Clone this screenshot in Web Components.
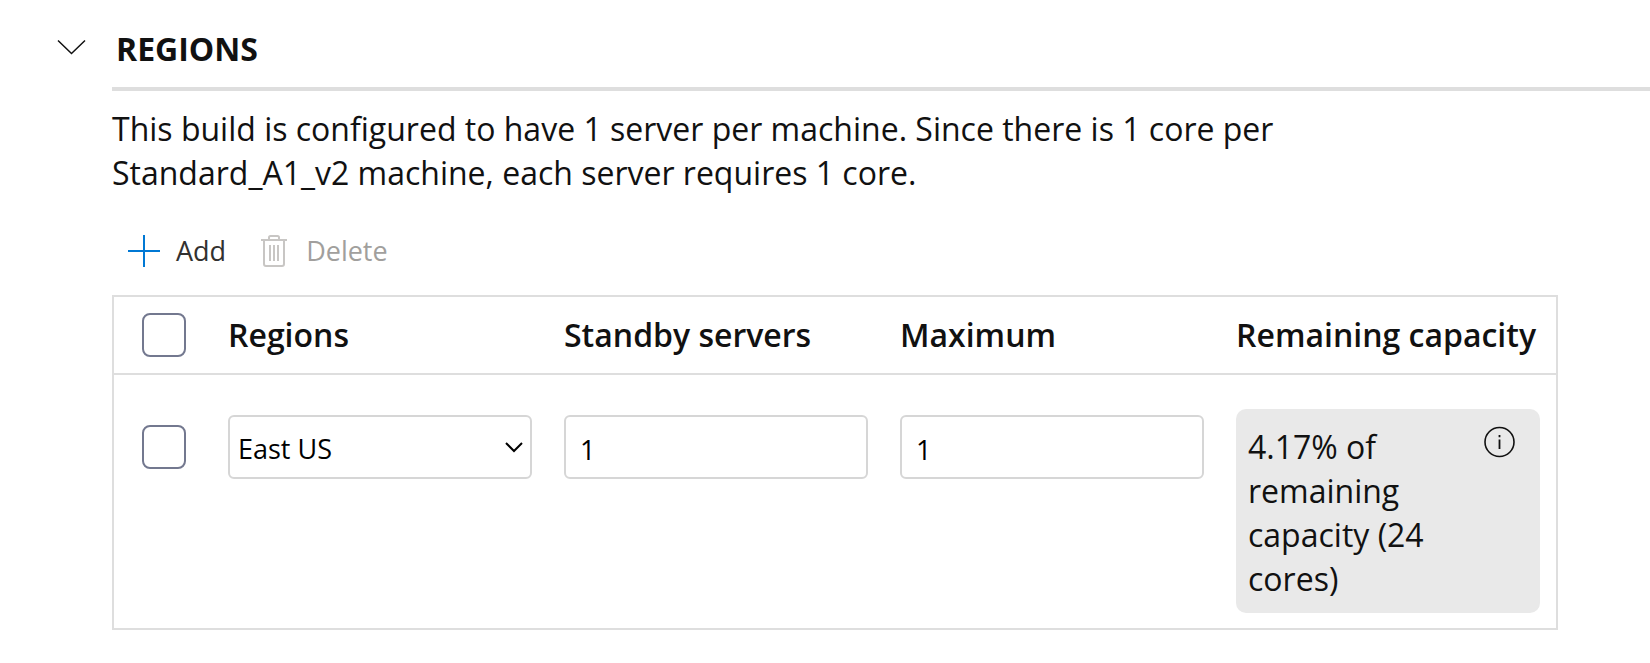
<!DOCTYPE html>
<html lang="en">
<head>
<meta charset="utf-8">
<title>Regions</title>
<style>
body { margin: 0; background: #fff; color: #111; font: 32px/44px "Open Sans", "Noto Sans", sans-serif; }
</style>
</head>
<body>
<collapsible-section>
  <span slot="title">REGIONS</span>
  <section-note>This build is configured to have 1 server per machine. Since there is 1 core per Standard_A1_v2 machine, each server requires 1 core.</section-note>
  <command-bar>
    <command-button icon="add">Add</command-button>
    <command-button icon="delete" disabled>Delete</command-button>
  </command-bar>
  <region-table>
    <capacity-note slot="capacity">4.17% of remaining capacity (24 cores)</capacity-note>
  </region-table>
</collapsible-section>
<script>
const define = (name, html, setup) => {
  const template = document.createElement('template');
  template.innerHTML = html;
  customElements.define(name, class extends HTMLElement {
    constructor() {
      super();
      this.attachShadow({ mode: 'open' }).append(template.content.cloneNode(true));
    }
    connectedCallback() { if (setup) setup(this, this.shadowRoot); }
  });
};

define('collapsible-section', `
<style>
:host { display: grid; grid-template-columns: 112px minmax(0, 1fr); }
button { align-self: start; justify-self: end; margin: 36px 24px 0 0; padding: 0; border: 0; background: none; display: flex; color: inherit; cursor: pointer; }
h2 { margin: 0; padding: 27px 4px 16px; border-bottom: 4px solid #dedede; font-size: 32px; line-height: 44px; font-weight: 700; }
.content { grid-column: 2; padding: 16px 92px 32px 0; }
.content[hidden] { display: none; }
</style>
<button type="button" aria-label="Toggle section" aria-expanded="true">
  <svg width="32" height="22" viewBox="0 0 32 22" fill="none" stroke="currentColor" stroke-width="1.5"><path d="M2 4.5 15.5 17.5 29 4.5"/></svg>
</button>
<h2><slot name="title"></slot></h2>
<div class="content"><slot></slot></div>`, (host, root) => {
  const button = root.querySelector('button');
  const content = root.querySelector('.content');
  button.onclick = () => {
    content.hidden = !content.hidden;
    button.setAttribute('aria-expanded', String(!content.hidden));
  };
});

define('section-note', `
<style>:host { display: block; max-width: 1200px; }</style><slot></slot>`);

define('command-bar', `
<style>:host { display: flex; gap: 32px; margin: 36px 0 24px 16px; }</style><slot></slot>`);

const icons = {
  add: '<svg width="32" height="32" viewBox="0 0 32 32" fill="none" stroke="#0078d4" stroke-width="2"><path d="M16 0v32M0 16h32"/></svg>',
  delete: '<svg width="32" height="32" viewBox="-2 0 32 32" fill="none" stroke="#c8c6c4" stroke-width="2"><path d="M1 5h26M9 5V2.5Q9 1 10.500 1h7Q19 1 19 2.500V5M4 5v24q0 2 2 2h16q2 0 2-2V5M10 10v16M14 10v16M18 10v16"/></svg>'
};
define('command-button', `
<style>
:host { display: block; }
button { display: flex; align-items: center; gap: 16px; height: 40px; padding: 0; border: 0; background: none; font: inherit; font-size: 27px; line-height: 40px; color: #323130; }
button:disabled { color: #a19f9d; }
.icon { display: flex; }
</style>
<button type="button"><span class="icon"></span><slot></slot></button>`, (host, root) => {
  root.querySelector('.icon').innerHTML = icons[host.getAttribute('icon')];
  root.querySelector('button').disabled = host.hasAttribute('disabled');
});

define('region-table', `
<style>
:host { display: block; }
table { width: 100%; table-layout: fixed; border: 2px solid #dedede; border-collapse: separate; border-spacing: 0; box-sizing: border-box; }
th { height: 76px; padding: 0 16px; border-bottom: 2px solid #dedede; font-size: 32px; line-height: 44px; font-weight: 600; text-align: left; white-space: nowrap; }
td { padding: 34px 16px 15px; vertical-align: top; }
.pick { width: 98px; padding-left: 28px; padding-right: 0; box-sizing: border-box; }
.control { display: flex; align-items: center; height: 76px; }
input[type=checkbox] { appearance: none; display: block; width: 44px; height: 44px; margin: 0; border: 2px solid #73788f; border-radius: 8px; background: #fff; box-sizing: border-box; }
input[type=checkbox]:checked { background: #0078d4; }
input[type=text], select { appearance: none; width: 100%; height: 64px; margin: 0; padding: 4px 14px 0; border: 2px solid #d6d6d6; border-radius: 6px; background: #fff; box-sizing: border-box; font: inherit; font-size: 27px; color: #000; }
select { padding: 4px 8px 0; }
.select { position: relative; }
.select svg { position: absolute; right: 8px; pointer-events: none; }
</style>
<table>
  <thead><tr>
    <th class="pick"><input type="checkbox" aria-label="Select all regions"></th>
    <th scope="col" id="region">Regions</th>
    <th scope="col" id="standby">Standby servers</th>
    <th scope="col" id="maximum">Maximum</th>
    <th scope="col">Remaining capacity</th>
  </tr></thead>
  <tbody><tr>
    <td class="pick"><div class="control"><input type="checkbox" aria-label="Select East US"></div></td>
    <td><div class="control select">
      <select aria-labelledby="region"><option>East US</option></select>
      <svg width="20" height="12" viewBox="0 0 20 12" fill="none" stroke="#000" stroke-width="2"><path d="M2 2 10 10 18 2"/></svg>
    </div></td>
    <td><div class="control"><input type="text" inputmode="numeric" value="1" aria-labelledby="standby"></div></td>
    <td><div class="control"><input type="text" inputmode="numeric" value="1" aria-labelledby="maximum"></div></td>
    <td><slot name="capacity"></slot></td>
  </tr></tbody>
</table>`);

define('capacity-note', `
<style>
:host { display: flex; align-items: flex-start; gap: 24px; padding: 16px 24px 12px 12px; border-radius: 10px; background: #e9e9e9; }
.text { flex: 1; min-width: 0; }
button { display: flex; padding: 0; border: 0; background: none; color: inherit; }
</style>
<div class="text"><slot></slot></div>
<button type="button" aria-label="More about remaining capacity">
  <svg width="32" height="34" viewBox="0 0 32 34" fill="none" stroke="currentColor" stroke-width="1.600"><circle cx="15.500" cy="17" r="14.500"/><path stroke-width="1.800" d="M15.500 14.500v9.500M15.500 10v2.200"/></svg>
</button>`);
</script>
</body>
</html>
